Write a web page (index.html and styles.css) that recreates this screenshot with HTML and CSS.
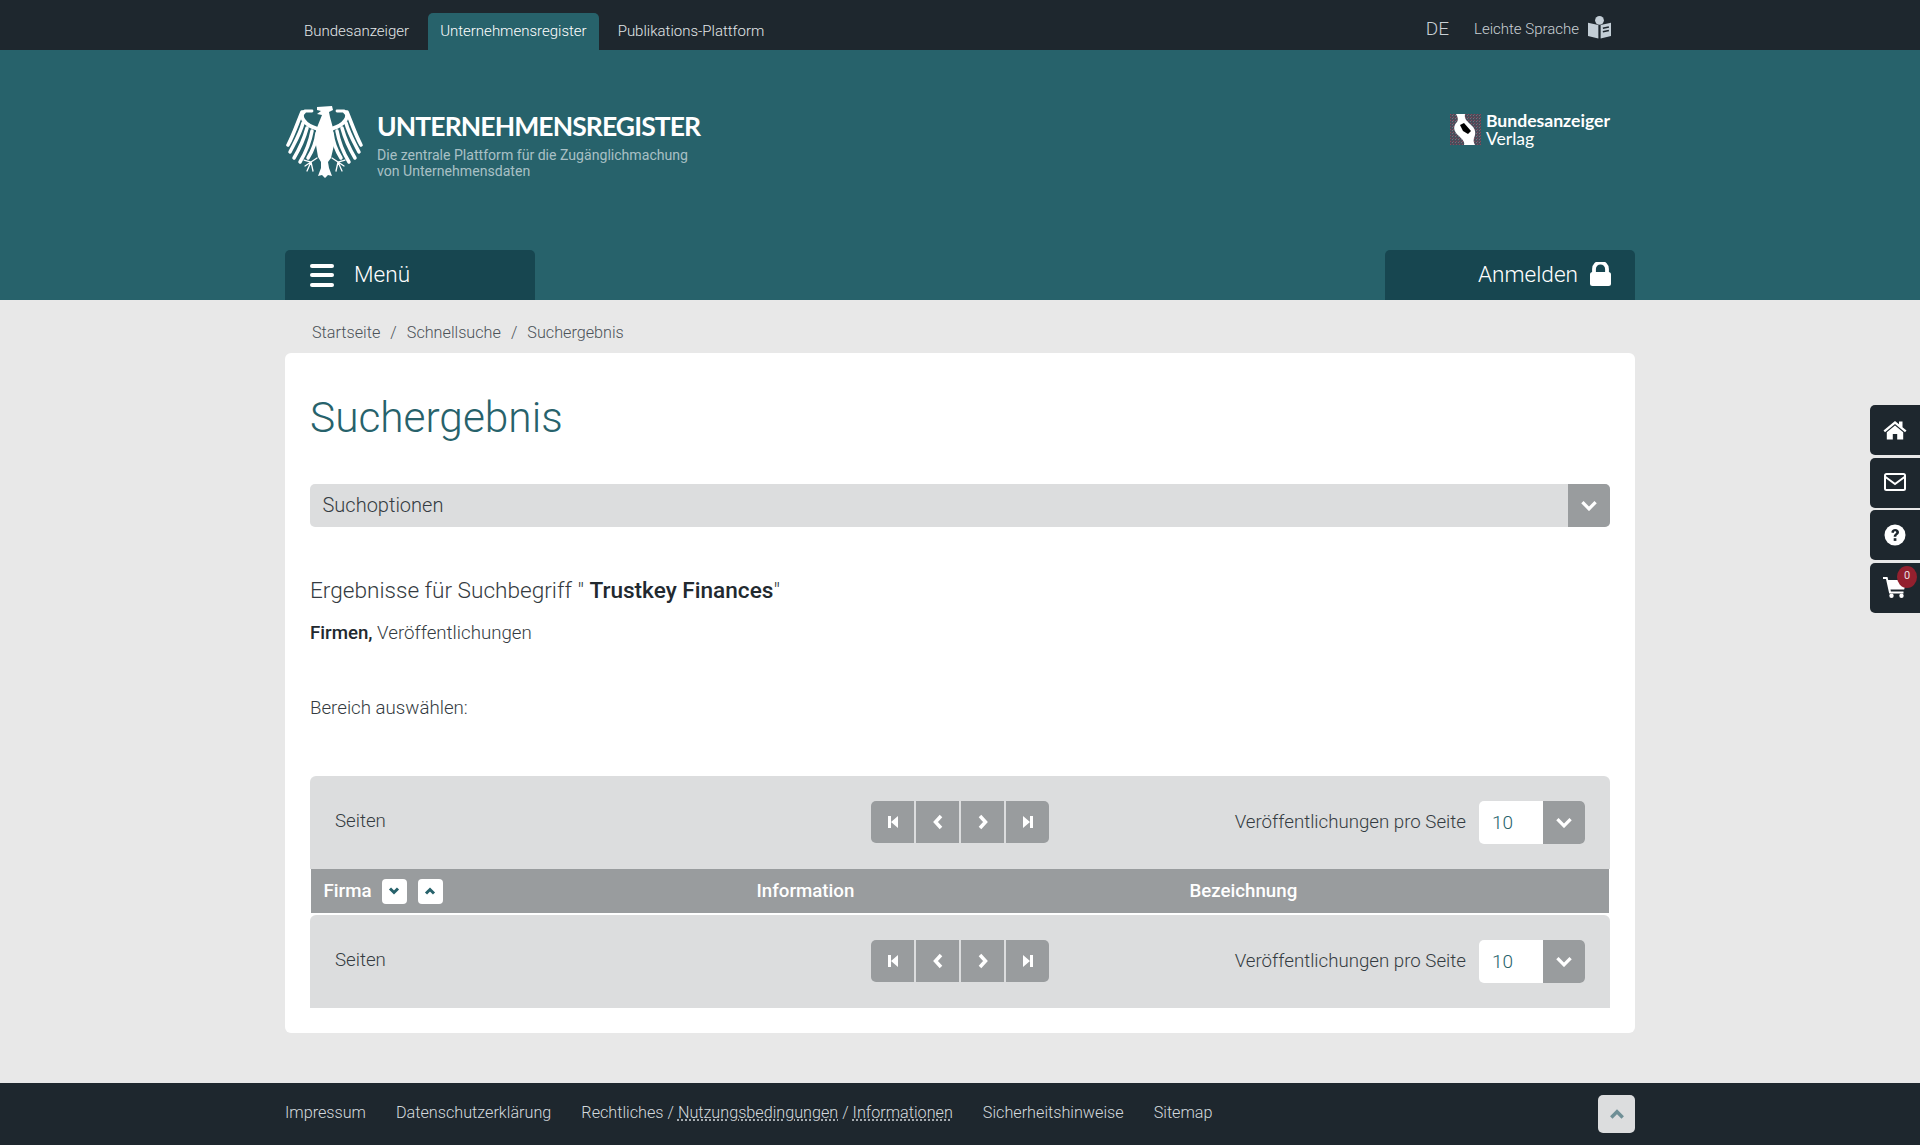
FILE: index.html
```html
<!DOCTYPE html>
<html lang="de">
<head>
<meta charset="utf-8">
<title>Suchergebnis - Unternehmensregister</title>
<link rel="stylesheet" href="styles.css">
</head>
<body>
<div class="topbar">
  <div class="container topbar-inner">
    <nav class="portal-tabs">
      <a class="portal-tab">Bundesanzeiger</a>
      <a class="portal-tab active">Unternehmensregister</a>
      <a class="portal-tab">Publikations-Plattform</a>
    </nav>
    <div class="topbar-right">
      <span class="lang">DE</span>
      <span class="easy">Leichte Sprache</span>
      <svg class="book" viewBox="0 0 24 24"><circle cx="12" cy="5" r="4.6" fill="#c3ced6"/><path d="M0 7.5 10.8 10v14L0 21.500z" fill="#c3ced6"/><path d="M24 7.500 13.200 10v14L24 21.500z" fill="#c3ced6"/><path d="M15.500 13.300 21.800 12M15.500 17 21.800 15.700" stroke="#1e272e" stroke-width="1.700" fill="none"/></svg>
    </div>
  </div>
</div>
<header class="masthead">
  <div class="container masthead-inner">
    <div class="brand-row">
      <div class="brand">
        <svg class="eagle" viewBox="6 5 78 74">
          <g fill="none" stroke="#fff" stroke-linecap="round">
            <path d="M24 12C19 15 23 25 38 29" stroke-width="3.800"/>
            <path d="M25 11 32 11" stroke-width="2.800"/>
            <path d="M22 12C17 24 13 36 8 45" stroke-width="3.600"/>
            <path d="M23 23C20 34 15 42 10 52" stroke-width="3.500"/>
            <path d="M27 28C24 39 20 48 14 58" stroke-width="3.500"/>
            <path d="M32 31C30 42 26 52 20 62" stroke-width="3.500"/>
            <path d="M37 33C36 42 33 50 28 58" stroke-width="3.500"/>
            <path d="M37 58 31 62M31 62 24 60M31 62 25 66M31 62 27 71M31 62 33 71" stroke-width="1.300"/>
          </g>
          <g fill="none" stroke="#fff" stroke-linecap="round">
            <path d="M65 12C70 15 66 25 51 29" stroke-width="3.800"/>
            <path d="M64 11 57 11" stroke-width="2.800"/>
            <path d="M67 12C72 24 76 36 81 45" stroke-width="3.600"/>
            <path d="M66 23C69 34 74 42 79 52" stroke-width="3.500"/>
            <path d="M62 28C65 39 69 48 75 58" stroke-width="3.500"/>
            <path d="M57 31C59 42 63 52 69 62" stroke-width="3.500"/>
            <path d="M52 33C53 42 56 50 61 58" stroke-width="3.500"/>
            <path d="M52 58 58 62M58 62 65 60M58 62 64 66M58 62 62 71M58 62 56 71" stroke-width="1.300"/>
          </g>
          <path d="M37 7 52 6 53 10 49 12 50 17 53 28 54 45 51 58 48 62 49 68 52 76 48 75 45 78 42 75 38 76 41 68 41 62 38 57 36 45 36 30 40 20 42 15 37 14 41 11 37 10z" fill="#fff"/>
        </svg>
        <div class="brand-text">
          <div class="brand-name">UNTERNEHMENSREGISTER</div>
          <div class="brand-sub">Die zentrale Plattform für die Zugänglichmachung<br>von Unternehmensdaten</div>
        </div>
      </div>
      <div class="publisher">
        <svg class="publisher-logo" viewBox="0 0 31 31"><defs><pattern id="noise" width="3" height="3" patternUnits="userSpaceOnUse"><rect width="3" height="3" fill="#4b4c5a"/><rect width="1" height="1" fill="#8a4a5c"/><rect x="2" y="1" width="1" height="1" fill="#6f7480"/></pattern></defs><rect width="31" height="31" fill="url(#noise)"/><path d="M6 0H15C14 5 17 7 21 11 26 15 26 20 24 24 23 27 24 29 25 31H14C15 28 13 26 9 22 3 17 3 12 7 8 9 5 7 2 6 0z" fill="#fff"/><path d="M10 11 14 9 21 17 18 20 13 17z" fill="#000"/></svg>
        <div class="publisher-text"><strong>Bundesanzeiger</strong><span>Verlag</span></div>
      </div>
    </div>
    <div class="tab-row">
      <a class="nav-tab menu-tab"><span class="burger"><i></i><i></i><i></i></span><span class="tab-label">Menü</span></a>
      <a class="nav-tab login-tab"><span class="tab-label">Anmelden</span>
        <svg class="lock" viewBox="0 0 21 24"><path d="M4 11V7a6.500 6.500 0 0 1 13 0v4" fill="none" stroke="#fff" stroke-width="3.800"/><rect y="10" width="21" height="14" rx="2.500" fill="#fff"/></svg>
      </a>
    </div>
  </div>
</header>
<main class="container main">
  <div class="breadcrumb"><a>Startseite</a><span>/</span><a>Schnellsuche</a><span>/</span><a>Suchergebnis</a></div>
  <section class="card">
    <h1>Suchergebnis</h1>
    <div class="options">
      <span class="options-label">Suchoptionen</span>
      <span class="options-arrow"><svg class="chev" viewBox="0 0 16 10"><path d="M2 2l6 6 6-6" /></svg></span>
    </div>
    <h2 class="result-title">Ergebnisse für Suchbegriff " <b>Trustkey Finances</b>"</h2>
    <p class="result-kinds"><b>Firmen,</b> Veröffentlichungen</p>
    <p class="area">Bereich auswählen:</p>
    <div class="pager pager-top">
      <span class="pages">Seiten</span>
      <div class="pager-buttons">
        <button class="pg"><svg viewBox="0 0 12 14"><path d="M1 1h3v12H1zM4 7l7-6v12z"/></svg></button>
        <button class="pg"><svg viewBox="0 0 12 16" class="stroke"><path d="M9 2 3.500 8 9 14"/></svg></button>
        <button class="pg"><svg viewBox="0 0 12 16" class="stroke"><path d="M3 2 8.500 8 3 14"/></svg></button>
        <button class="pg"><svg viewBox="0 0 12 14"><path d="M11 1H8v12h3zM8 7 1 1v12z"/></svg></button>
      </div>
      <div class="per-page">
        <span>Veröffentlichungen pro Seite</span>
        <div class="select"><span class="select-val">10</span><span class="select-arrow"><svg class="chev" viewBox="0 0 16 10"><path d="M2 2l6 6 6-6"/></svg></span></div>
      </div>
    </div>
    <div class="thead">
      <div class="th">Firma
        <span class="sort"><svg viewBox="0 0 12 8"><path d="M2 1.500 6 5.500 10 1.500"/></svg></span>
        <span class="sort"><svg viewBox="0 0 12 8"><path d="M2 6.500 6 2.500 10 6.500"/></svg></span>
      </div>
      <div class="th">Information</div>
      <div class="th">Bezeichnung</div>
    </div>
    <div class="pager pager-bottom">
      <span class="pages">Seiten</span>
      <div class="pager-buttons">
        <button class="pg"><svg viewBox="0 0 12 14"><path d="M1 1h3v12H1zM4 7l7-6v12z"/></svg></button>
        <button class="pg"><svg viewBox="0 0 12 16" class="stroke"><path d="M9 2 3.500 8 9 14"/></svg></button>
        <button class="pg"><svg viewBox="0 0 12 16" class="stroke"><path d="M3 2 8.500 8 3 14"/></svg></button>
        <button class="pg"><svg viewBox="0 0 12 14"><path d="M11 1H8v12h3zM8 7 1 1v12z"/></svg></button>
      </div>
      <div class="per-page">
        <span>Veröffentlichungen pro Seite</span>
        <div class="select"><span class="select-val">10</span><span class="select-arrow"><svg class="chev" viewBox="0 0 16 10"><path d="M2 2l6 6 6-6"/></svg></span></div>
      </div>
    </div>
  </section>
</main>
<aside class="side-tools">
  <a class="tool"><svg class="tool-icon" viewBox="0 0 24 20" width="24" height="20"><path d="M12 1 0.500 10.500 2 12.300 12 4 22 12.300 23.500 10.500 19.500 7.200V1.500H16V4.300z" fill="#fff"/><path d="M12 5.500 3.800 12.300V19.500H9.800V14H14.200V19.500H20.200V12.300z" fill="#fff"/></svg></a>
  <a class="tool"><svg class="tool-icon" viewBox="0 0 22 18" width="22" height="18"><rect x="1" y="1" width="20" height="16" rx="1.500" fill="none" stroke="#fff" stroke-width="2"/><path d="M1.500 4 11 11 20.500 4" fill="none" stroke="#fff" stroke-width="2"/></svg></a>
  <a class="tool"><svg class="tool-icon" viewBox="0 0 22 22" width="22" height="22"><circle cx="11" cy="11" r="10.500" fill="#fff"/><path d="M7.300 8.500C7.500 6.200 9 5 11.200 5 13.400 5 15 6.300 15 8.200 15 10.500 12.300 10.700 12.300 12.800H9.700C9.700 9.800 12.300 9.700 12.300 8.300 12.300 7.600 11.800 7.200 11.100 7.200 10.300 7.200 9.900 7.800 9.700 8.900z" fill="#1e272e"/><rect x="9.700" y="14.200" width="2.700" height="2.700" fill="#1e272e"/></svg></a>
  <a class="tool cart"><svg class="tool-icon" viewBox="0 0 24 22" width="24" height="22"><path d="M0 1H4.500L5.200 4H23.500L21.200 13.500H7.500L7.900 15.500H20.500V17.500H6.200L3 3H0z" fill="#fff"/><circle cx="8.500" cy="19.800" r="2.200" fill="#fff"/><circle cx="18.500" cy="19.800" r="2.200" fill="#fff"/></svg><span class="badge">0</span></a>
</aside>
<footer class="footer">
  <div class="container footer-inner">
    <nav class="footer-links">
      <a>Impressum</a>
      <a>Datenschutzerklärung</a>
      <a>Rechtliches / <u>Nutzungsbedingungen</u> / <u>Informationen</u></a>
      <a>Sicherheitshinweise</a>
      <a>Sitemap</a>
    </nav>
    <a class="to-top"><svg viewBox="0 0 14 10"><path d="M2 8 7 3 12 8"/></svg></a>
  </div>
</footer>
</body>
</html>
```
FILE: styles.css
```css
* { box-sizing: border-box; }
html, body { margin: 0; padding: 0; }
body {
  background: #e8e8e8;
  color: #343b41;
  font-family: Roboto, "Liberation Sans", sans-serif;
  font-weight: 300;
  font-size: 18.700px;
  min-height: 1145px;
  position: relative;
  overflow-x: hidden;
}
.container { width: 1350px; margin: 0 auto; }

/* top bar */
.topbar { background: #1e272e; height: 50px; }
.topbar-inner { display: flex; justify-content: space-between; height: 50px; }
.portal-tabs { display: flex; align-items: flex-end; gap: 7px; padding-left: 7px; }
.portal-tab {
  height: 37px;
  padding: 0 12px;
  font-size: 15px;
  line-height: 37px;
  color: #e2e6e8;
  border-radius: 5px 5px 0 0;
}
.portal-tab.active { background: #27626b; color: #fff; }
.topbar-right { display: flex; align-items: center; padding: 6px 24px 0 0; color: #c9d0d5; }
.lang { font-size: 19px; margin-right: 25px; }
.easy { font-size: 15px; margin: 1px 9px 0 0; }
.book { width: 23px; height: 24px; margin-top: -3px; }

/* masthead */
.masthead { background: #27626b; height: 250px; }
.masthead-inner { height: 250px; display: flex; flex-direction: column; justify-content: space-between; }
.brand-row { display: flex; justify-content: space-between; padding: 55px 25px 0 1px; }
.brand { display: flex; }
.eagle { width: 78px; height: 74px; }
.brand-text { margin-left: 13px; }
.brand-name {
  font-family: Lato, "Noto Sans", sans-serif;
  font-weight: 700;
  font-size: 26.500px;
  letter-spacing: -0.900px;
  line-height: 32px;
  margin-top: 5px;
  color: #fff;
}
.brand-sub { font-size: 14.100px; font-weight: 400; line-height: 16px; margin-top: 5px; color: #a9c0c5; }
.publisher { display: flex; margin-top: 7px; }
.publisher-logo { width: 31px; height: 31px; margin: 2px 5px 0 0; }
.publisher-text { display: flex; flex-direction: column; color: #fff; font-family: Lato, "Noto Sans", sans-serif; font-size: 17.600px; line-height: 17.500px; }
.publisher-text strong { font-weight: 700; }
.publisher-text span { font-weight: 400; }
.tab-row { display: flex; justify-content: space-between; }
.nav-tab {
  width: 250px;
  height: 50px;
  display: flex;
  align-items: center;
  background: #174650;
  color: #fff;
  font-size: 22.600px;
  border-radius: 5px 5px 0 0;
}
.tab-label { margin-top: -2px; }
.menu-tab { padding-left: 25px; }
.login-tab { justify-content: flex-end; padding-right: 24px; }
.burger { display: flex; flex-direction: column; gap: 5.500px; width: 24px; margin-right: 20px; }
.burger i { display: block; height: 4px; background: #fff; border-radius: 2px; }
.lock { width: 21px; height: 24px; margin-left: 12px; margin-top: -2px; }

/* main */
.main { padding-bottom: 50px; }
.breadcrumb { height: 53px; padding: 23px 0 0 27px; font-size: 16.200px; line-height: 20px; color: #4c5358; display: flex; gap: 10px; }
.card { background: #fff; border-radius: 6px; padding: 25px; height: 680px; }
h1 { margin: 13px 0 0; font-size: 42.400px; font-weight: 300; line-height: 54px; color: #27626b; }
.options {
  margin-top: 39px;
  height: 43px;
  background: #dcddde;
  border-radius: 5px;
  display: flex;
  justify-content: space-between;
  align-items: center;
  padding-left: 12.500px;
  font-size: 20px;
  overflow: hidden;
}
.options-label { margin-top: -2px; }
.options-arrow { width: 42px; height: 43px; background: #999c9e; display: flex; align-items: center; justify-content: center; }
.chev { width: 18px; height: 11px; fill: none; stroke: #fff; stroke-width: 3; }
.result-title { margin: 50px 0 0; font-size: 22.600px; line-height: 28px; font-weight: 300; }
.result-title b, .result-kinds b { font-weight: 500; color: #22292f; }
.result-kinds { margin: 16px 0 0; font-size: 18.700px; line-height: 24px; }
.area { margin: 51px 0 0; font-size: 18.700px; line-height: 24px; }

/* pager */
.pager { display: grid; grid-template-columns: 1fr 178px 1fr; align-items: center; background: #dcddde; padding: 0 25px 1px; }
.pager-top { margin-top: 56px; height: 93px; border-radius: 6px 6px 0 0; }
.pager-bottom { height: 93px; margin-top: 2px; border-radius: 6px 6px 0 0; }
.pages { margin-top: -3px; }
.pager-buttons { display: flex; gap: 2px; border-radius: 5px; overflow: hidden; }
.pg {
  width: 43px;
  height: 42px;
  padding: 0;
  background: #999c9e;
  border: 0;
  display: flex;
  align-items: center;
  justify-content: center;
}
.pg svg { width: 12px; height: 14px; fill: #fff; }
.pg svg.stroke { width: 12px; height: 16px; fill: none; stroke: #fff; stroke-width: 3.500; }
.per-page { display: flex; justify-content: flex-end; align-items: center; gap: 13px; }
.select { width: 106px; height: 43px; display: flex; border-radius: 5px; overflow: hidden; background: #fff; }
.select-val { width: 64px; padding-left: 13px; line-height: 43px; font-size: 19px; color: #27626b; }
.select-arrow { width: 42px; background: #999c9e; display: flex; align-items: center; justify-content: center; }

/* table head */
.thead { display: grid; grid-template-columns: repeat(3, 433px); margin: 0 1px; height: 44px; background: #999c9e; }
.th { display: flex; align-items: center; padding-left: 12.500px; color: #fff; font-weight: 500; font-size: 18.700px; }
.sort { width: 25px; height: 25px; margin-left: 10px; background: #fff; border-radius: 4px; display: flex; align-items: center; justify-content: center; }
.sort + .sort { margin-left: 11px; }
.sort svg { width: 12px; height: 8px; fill: none; stroke: #27626b; stroke-width: 3; }

/* side tools */
.side-tools { position: absolute; top: 405px; right: 0; display: flex; flex-direction: column; gap: 2.670px; }
.tool { position: relative; width: 50px; height: 50px; background: #1e272e; border-radius: 5px 0 0 5px; display: flex; align-items: center; justify-content: center; }
.tool-icon { margin-top: -1px; }
.badge { position: absolute; top: 3px; right: 3px; width: 20px; height: 22px; border-radius: 50%; background: #93202e; color: #e9dfe0; font-size: 11px; font-weight: 400; text-align: center; line-height: 20px; }

/* footer */
.footer { background: #1e272e; height: 62px; }
.footer-inner { display: flex; justify-content: space-between; align-items: center; height: 62px; }
.footer-links { display: flex; gap: 30px; font-size: 16.200px; color: #d3d9dd; margin-top: -4px; }
.footer-links u { text-decoration: underline dotted; text-underline-offset: 2px; }
.to-top { width: 37px; height: 38px; background: #dcddde; border-radius: 5px; display: flex; align-items: center; justify-content: center; }
.to-top svg { width: 16px; height: 12px; fill: none; stroke: #6f8f96; stroke-width: 3; }
```
